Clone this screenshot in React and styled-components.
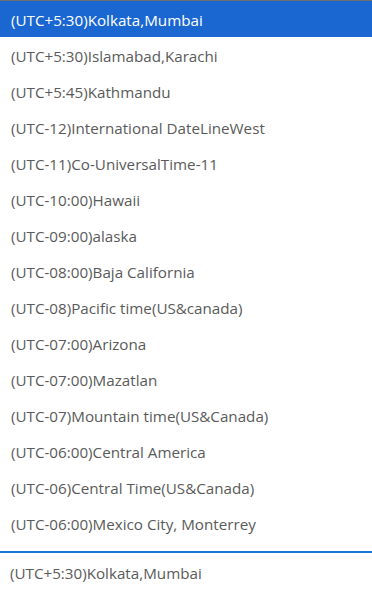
import React from 'react'
import styled, { createGlobalStyle } from 'styled-components'

const zones = [
  '(UTC+5:30)Kolkata,Mumbai',
  '(UTC+5:30)Islamabad,Karachi',
  '(UTC+5:45)Kathmandu',
  '(UTC-12)International DateLineWest',
  '(UTC-11)Co-UniversalTime-11',
  '(UTC-10:00)Hawaii',
  '(UTC-09:00)alaska',
  '(UTC-08:00)Baja California',
  '(UTC-08)Pacific time(US&canada)',
  '(UTC-07:00)Arizona',
  '(UTC-07:00)Mazatlan',
  '(UTC-07)Mountain time(US&Canada)',
  '(UTC-06:00)Central America',
  '(UTC-06)Central Time(US&Canada)',
  '(UTC-06:00)Mexico City, Monterrey',
]

const GlobalStyle = createGlobalStyle`
  html, body {
    margin: 0;
    background: #fff;
    font-family: "Open Sans", "Noto Sans", sans-serif;
  }
`

const Picker = styled.div`
  width: 372px;
  height: 593px;
  display: flex;
  flex-direction: column;
  overflow: hidden;
`

const List = styled.ul`
  list-style: none;
  margin: 0;
  padding: 0 0 10px;
  border-top: 1px solid #6e6e6e;
`

const Option = styled.li`
  height: 36px;
  display: flex;
  align-items: center;
  padding: 1px 0 0 11px;
  box-sizing: border-box;
  font-size: 15.2px;
  color: ${p => (p.$active ? '#fff' : '#5a5a5a')};
  background: ${p => (p.$active ? '#1a67d2' : 'transparent')};
`

const Field = styled.div`
  border-top: 2px solid #1976d2;
  height: 42px;
  display: flex;
  align-items: center;
  padding-left: 10px;
  font-size: 15.2px;
  color: #5a5a5a;
`

export default function App() {
  const selected = zones[0]
  return (
    <>
      <GlobalStyle />
      <Picker>
        <List>
          {zones.map(z => (
            <Option key={z} $active={z === selected}>{z}</Option>
          ))}
        </List>
        <Field>{selected}</Field>
      </Picker>
    </>
  )
}
